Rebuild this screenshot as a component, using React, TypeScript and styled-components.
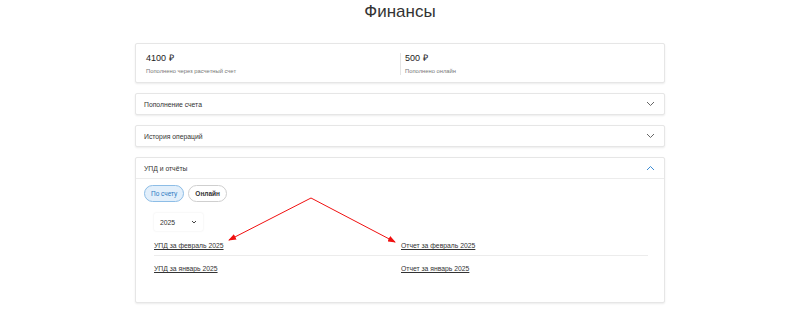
import React, { useState } from 'react'
import styled, { createGlobalStyle } from 'styled-components'

const Global = createGlobalStyle`
body {
    margin: 0;
    background: #fff;
    font-family: "Liberation Sans", Arial, sans-serif;
    color: #222;
}
`
const Page = styled.div`
position: relative;
width: 800px;
height: 309px;
overflow: hidden;
`
const Wrap = styled.div`
width: 530px;
margin: 0 auto;
`
const Title = styled.h1`
margin: 0 0 20px;
font-size: 17px;
line-height: 23px;
font-weight: 400;
text-align: center;
color: #333;
`
const Card = styled.div`
background: #fff;
border: 1px solid #e6e6e6;
border-radius: 2px;
box-shadow: 0 1px 2px rgba(0,0,0,0.08);
box-sizing: border-box;
`
const Balance = styled(Card)`
height: 40px;
padding: 9px 10px;
display: grid;
grid-template-columns: 1fr 1fr;
`
const BalanceCol = styled.div<{ $divider?: boolean }>`
display: flex;
flex-direction: column;
gap: 3px;
padding-left: ${p => p.$divider ? '4px' : '0'};
border-left: ${p => p.$divider ? '1px solid #e4e4e4' : 'none'};
`
const Sum = styled.div`
font-size: 9px;
line-height: 11px;
color: #222;
`
const Caption = styled.div`
font-size: 5.8px;
line-height: 8px;
color: #777;
`
const Section = styled(Card)`
margin-top: 10px;
`
const SectionHead = styled.div<{ $open?: boolean }>`
box-sizing: border-box;
display: flex;
align-items: center;
justify-content: space-between;
padding: 0 9px 0 8px;
font-size: 6.8px;
color: #333;
border-bottom: ${p => p.$open ? '1px solid #ececec' : 'none'};
height: ${p => p.$open ? '21px' : '20px'};
cursor: pointer;
`
const SectionBody = styled.div`
padding: 6px 16px 26px 8px;
`
const Pills = styled.div`
display: flex;
gap: 4px;
`
const Pill = styled.button<{ $active?: boolean }>`
height: 17px;
padding: 0 6px;
border-radius: 9px;
font-family: inherit;
font-size: 6.5px;
font-weight: ${p => p.$active ? 400 : 700};
color: ${p => p.$active ? '#2a79c2' : '#333'};
background: ${p => p.$active ? '#e2effb' : '#fff'};
border: 1px solid ${p => p.$active ? '#8dbde6' : '#cfcfcf'};
cursor: pointer;
`
const YearSelect = styled.div`
margin: 11px 0 0 10px;
width: 49px;
height: 18px;
box-sizing: border-box;
display: flex;
align-items: center;
justify-content: space-between;
padding: 0 6px;
font-size: 6.8px;
color: #333;
border-radius: 2px;
box-shadow: 0 0 2px rgba(0,0,0,0.1);
`
const Rows = styled.div`
margin-left: 10px;
`
const Row = styled.div<{ $last?: boolean }>`
height: ${p => p.$last ? '20px' : '24px'};
display: grid;
grid-template-columns: 247px 1fr;
align-items: center;
border-bottom: ${p => p.$last ? 'none' : '1px solid #ececec'};
`
const DocLink = styled.a`
font-size: 6.8px;
color: #333;
text-decoration: underline;
cursor: pointer;
`
const Overlay = styled.svg`
position: absolute;
left: 0;
top: 0;
pointer-events: none;
`

function Chevron({ up, color }: { up?: boolean, color: string }) {
    return (
        <svg width="9" height="6" viewBox="0 0 9 6">
            <path d={up ? 'M1 5L4.5 1.5L8 5' : 'M1 1L4.5 4.5L8 1'} fill="none" stroke={color} strokeWidth="1" />
        </svg>
    )
}

function App() {
    const [tab, setTab] = useState<string>('account');

    const sections = [
        { title: 'Пополнение счета' },
        { title: 'История операций' },
    ];

    const docs = [
        ['УПД за февраль 2025', 'Отчет за февраль 2025'],
        ['УПД за январь 2025', 'Отчет за январь 2025'],
    ];

    return (
        <Page>
            <Global />
            <Wrap>
                <Title>Финансы</Title>
                <Balance>
                    <BalanceCol>
                        <Sum>4100 ₽</Sum>
                        <Caption>Пополнено через расчетный счет</Caption>
                    </BalanceCol>
                    <BalanceCol $divider>
                        <Sum>500 ₽</Sum>
                        <Caption>Пополнено онлайн</Caption>
                    </BalanceCol>
                </Balance>
                {sections.map(s => (
                    <Section key={s.title}>
                        <SectionHead>
                            {s.title}
                            <Chevron color="#666" />
                        </SectionHead>
                    </Section>
                ))}
                <Section>
                    <SectionHead $open>
                        УПД и отчёты
                        <Chevron up color="#3a8bd4" />
                    </SectionHead>
                    <SectionBody>
                        <Pills>
                            <Pill $active={tab === 'account'} onClick={() => setTab('account')}>По счету</Pill>
                            <Pill $active={tab === 'online'} onClick={() => setTab('online')}>Онлайн</Pill>
                        </Pills>
                        <YearSelect>
                            2025
                            <svg width="6" height="4" viewBox="0 0 6 4">
                                <path d="M1 1L3 3L5 1" fill="none" stroke="#444" strokeWidth="1" />
                            </svg>
                        </YearSelect>
                        <Rows>
                            {docs.map((d, idx) => (
                                <Row key={d[0]} $last={idx === docs.length - 1}>
                                    <span><DocLink>{d[0]}</DocLink></span>
                                    <span><DocLink>{d[1]}</DocLink></span>
                                </Row>
                            ))}
                        </Rows>
                    </SectionBody>
                </Section>
            </Wrap>
            <Overlay width="800" height="309">
                <defs>
                    <marker id="head" markerWidth="8" markerHeight="6" refX="7" refY="3" orient="auto" markerUnits="userSpaceOnUse">
                        <path d="M0 0L8 3L0 6Z" fill="#f01010" />
                    </marker>
                </defs>
                <line x1="311" y1="198" x2="229" y2="240" stroke="#f01010" strokeWidth="1" markerEnd="url(#head)" />
                <line x1="311" y1="198" x2="395" y2="242" stroke="#f01010" strokeWidth="1" markerEnd="url(#head)" />
            </Overlay>
        </Page>
    )
}

export default App
